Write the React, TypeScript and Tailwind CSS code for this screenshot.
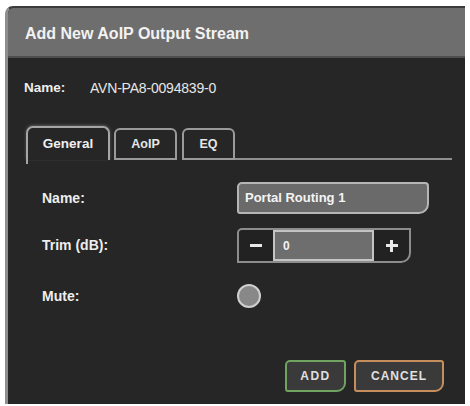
import React from "react";

export default function App() {
  const font = { fontFamily: '"Liberation Sans", Arial, sans-serif' };
  return (
    <div className="w-[470px] h-[406px] bg-white" style={font}>
      <div className="ml-[5px] pt-[6px]">
        <div className="w-[460px] h-[398px] flex flex-col rounded-tl-[8px] overflow-hidden border-t-2 border-t-[#3c3c3c] border-l-[3px] border-l-[#8e8e8e] bg-[#262626]">
          {/* Header */}
          <div className="h-[50px] shrink-0 bg-[#6e6e6e] border-b-2 border-b-[#4f4f4f] flex items-center pl-[17px] pt-[3px]">
            <span className="text-[16px] font-bold text-[#f2f2f2]">Add New AoIP Output Stream</span>
          </div>
          {/* Body */}
          <div className="flex-1 flex flex-col pl-[16px] pr-[13px]">
            <div className="mt-[22px] h-[16px] flex items-center gap-[12px]">
              <span className="text-[13.5px] font-bold text-[#eeeeee] w-[54px]">Name:</span>
              <span className="text-[14px] text-[#e6e6e6] tracking-[-0.2px]">AVN-PA8-0094839-0</span>
            </div>

            {/* Tabs */}
            <div className="mt-[30px] ml-[2px] flex items-end h-[34px]">
              <div className="relative h-[34px] w-[84px] rounded-t-[7px] border-[2px] border-b-0 border-[#a5a5a5] bg-[#262626] flex items-center justify-center shadow-[0_-1px_3px_rgba(255,255,255,0.25)]">
                <span className="text-[13.5px] font-bold text-[#f0f0f0]">General</span>
                <div className="absolute left-[-2px] top-[32px] h-[4px] w-[2px] bg-[#a5a5a5]" />
              </div>
              <div className="ml-[4px] flex items-end flex-1">
                <div className="h-[32px] w-[63px] rounded-t-[6px] border-[2px] border-[#9a9a9a] flex items-center justify-center">
                  <span className="text-[12.5px] font-bold text-[#e6e6e6]">AoIP</span>
                </div>
                <div className="ml-[5px] h-[32px] w-[53px] rounded-t-[6px] border-[2px] border-[#9a9a9a] flex items-center justify-center">
                  <span className="text-[12.5px] font-bold text-[#e6e6e6]">EQ</span>
                </div>
                <div className="flex-1 h-[2px] bg-[#8f8f8f]" />
              </div>
            </div>

            {/* Form */}
            <div className="ml-[18px] mt-[22px] flex items-center h-[32px]">
              <span className="w-[195px] text-[14px] font-bold text-[#eeeeee]">Name:</span>
              <div className="w-[192px] h-[32px] bg-[#6a6a6a] border-[2px] border-[#b5b5b5] rounded-tl-[5px] rounded-tr-[4px] rounded-bl-[3px] rounded-br-[10px] flex items-center pl-[6px]">
                <span className="text-[13px] font-bold text-[#f4f4f4]">Portal Routing 1</span>
              </div>
            </div>

            <div className="ml-[18px] mt-[14px] flex items-center h-[35px]">
              <span className="w-[195px] text-[14px] font-bold text-[#eeeeee]">Trim (dB):</span>
              <div className="flex h-[35px] w-[174px] rounded-tl-[5px] rounded-br-[10px] border-[2px] border-[#8d8d8d] bg-[#222222] overflow-hidden">
                <div className="w-[34px] flex items-center justify-center">
                  <span className="block w-[12px] h-[3px] bg-[#e8e8e8]" />
                </div>
                <div className="w-[101px] bg-[#6e6e6e] border-[2px] border-[#c4c4c4] flex items-center pl-[8px]">
                  <span className="text-[12px] font-bold text-[#f2f2f2]">0</span>
                </div>
                <div className="flex-1 flex items-center justify-center relative">
                  <span className="block w-[12px] h-[3px] bg-[#e8e8e8]" />
                  <span className="absolute block w-[3px] h-[12px] bg-[#e8e8e8]" />
                </div>
              </div>
            </div>

            <div className="ml-[18px] mt-[20px] flex items-center h-[26px]">
              <span className="w-[195px] text-[14px] font-bold text-[#eeeeee]">Mute:</span>
              <div className="w-[24px] h-[24px] rounded-full bg-[#888888] border-[2px] border-[#cfcfcf]" />
            </div>

            {/* Buttons */}
            <div className="mt-[51px] flex justify-end gap-[8px] pr-[8px]">
              <div className="w-[61px] h-[32px] rounded-tl-[5px] rounded-tr-[3px] rounded-bl-[3px] rounded-br-[9px] border-[2px] border-[#6fa35f] bg-[#3a3a3a] flex items-center justify-center">
                <span className="text-[12px] font-bold text-[#e0e0e0] tracking-[1.5px]">ADD</span>
              </div>
              <div className="w-[90px] h-[32px] rounded-tl-[5px] rounded-tr-[3px] rounded-bl-[3px] rounded-br-[9px] border-[2px] border-[#c58e5c] bg-[#3a3a3a] flex items-center justify-center">
                <span className="text-[12px] font-bold text-[#e0e0e0] tracking-[1px]">CANCEL</span>
              </div>
            </div>
          </div>
        </div>
      </div>
    </div>
  );
}
